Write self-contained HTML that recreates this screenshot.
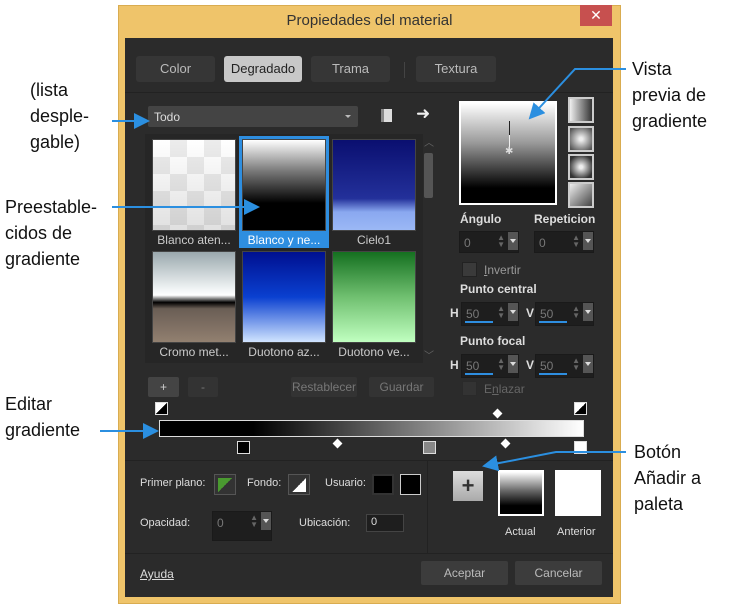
<!DOCTYPE html>
<html><head><meta charset="utf-8"><style>
*{margin:0;padding:0;box-sizing:border-box}
body{width:735px;height:609px;background:#fff;position:relative;overflow:hidden;font-family:"Liberation Sans",sans-serif}
.a{position:absolute}
.ann{position:absolute;font-size:18px;color:#111;line-height:26px}
.t{position:absolute;font-size:12px;color:#ddd;white-space:nowrap}
.tab{position:absolute;top:56px;height:26px;background:#363636;border-radius:3px;color:#bbb;font-size:13px;text-align:center;line-height:26px}
.btn{position:absolute;background:#3a3a3a;border-radius:2px;color:#777;font-size:12px;text-align:center}
.spin{position:absolute;background:#1e1e1e;border:1px solid #1a1a1a}
.spin .v{position:absolute;left:4px;top:4px;font-size:12px;color:#777}
.spin .dd{position:absolute;right:0;top:0;width:10px;height:18px;background:#555}
.spin .dd:after{content:"";position:absolute;left:2px;top:7px;border-left:3px solid transparent;border-right:3px solid transparent;border-top:4px solid #ddd}
.spin .ud{position:absolute;right:13px;top:2px;color:#666;font-size:8px;line-height:7px}
.bar{position:absolute;left:3px;bottom:2px;height:2px;width:28px;background:#2e8ee0}
.th{position:absolute;border:1px solid #444}
.lab{position:absolute;font-size:12px;color:#ccc;text-align:center}
.ico{position:absolute;left:568px;width:26px;height:26px;border:2px solid #ccc;background:#222}
.sw{position:absolute;border:1px solid #555}
.dia{position:absolute;width:7px;height:7px;background:#fff;transform:rotate(45deg)}
.mk{position:absolute;width:13px;height:13px;border:1px solid #ddd;background:#333}
</style></head><body>
<div class="a" style="left:118px;top:5px;width:503px;height:599px;background:#efc46a;border:1px solid #d9ac50"></div>
<div class="t" style="left:118px;width:503px;top:12px;text-align:center;font-size:15px;color:#333">Propiedades del material</div>
<div class="a" style="left:580px;top:5px;width:32px;height:21px;background:#c7504f;color:#fff;font-size:14px;text-align:center;line-height:21px">✕</div>
<div class="a" style="left:125px;top:38px;width:488px;height:559px;background:#2b2b2b"></div>
<div class="tab" style="left:136px;width:79px">Color</div>
<div class="tab" style="left:224px;width:78px;background:#c8c8c8;color:#222">Degradado</div>
<div class="tab" style="left:311px;width:79px">Trama</div>
<div class="a" style="left:404px;top:62px;width:1px;height:16px;background:#444"></div>
<div class="tab" style="left:416px;width:80px">Textura</div>
<div class="a" style="left:125px;top:92px;width:488px;height:1px;background:#222"></div>
<div class="a" style="left:148px;top:106px;width:210px;height:21px;background:#444;border-radius:2px"></div>
<div class="t" style="left:154px;top:110px;color:#ddd">Todo</div>
<div class="a" style="left:345px;top:115px;border-left:3px solid transparent;border-right:3px solid transparent;border-top:3px solid #bbb"></div>
<div class="a" style="left:381px;top:109px;width:11px;height:13px;background:#ddd;border-left:3px solid #888"></div>
<div class="t" style="left:416px;top:104px;font-size:17px;color:#eee">➜</div>
<div class="a" style="left:145px;top:134px;width:278px;height:229px;background:#262626"></div>
<div class="th" style="left:152px;top:139px;width:84px;height:92px;background-color:#fff;background-image:linear-gradient(rgba(0,0,0,0),rgba(0,0,0,0.12)),linear-gradient(45deg,#ececec 25%,transparent 25%,transparent 75%,#ececec 75%),linear-gradient(45deg,#ececec 25%,transparent 25%,transparent 75%,#ececec 75%);background-size:100% 100%,34px 34px,34px 34px;background-position:0 0,0 0,17px 17px"></div>
<div class="lab" style="left:150px;top:233px;width:88px">Blanco aten...</div>
<div class="a" style="left:239px;top:136px;width:90px;height:112px;background:#2e8ee0"></div>
<div class="th" style="left:242px;top:139px;width:84px;height:92px;background:linear-gradient(#fff,#777 35%,#000 70%,#000)"></div>
<div class="lab" style="left:239px;top:233px;width:90px;color:#fff">Blanco y ne...</div>
<div class="th" style="left:332px;top:139px;width:84px;height:92px;background:linear-gradient(#0a0f70,#23309a 65%,#8aa8f0 80%,#9bb8f5)"></div>
<div class="lab" style="left:330px;top:233px;width:88px">Cielo1</div>
<div class="th" style="left:152px;top:251px;width:84px;height:92px;background:linear-gradient(#9aa8ad,#eef2f3 40%,#fff 48%,#000 56%,#6a5e55 63%,#928070)"></div>
<div class="lab" style="left:150px;top:345px;width:88px">Cromo met...</div>
<div class="th" style="left:242px;top:251px;width:84px;height:92px;background:linear-gradient(#001090,#0a40d0 50%,#d0e4ff)"></div>
<div class="lab" style="left:240px;top:345px;width:88px">Duotono az...</div>
<div class="th" style="left:332px;top:251px;width:84px;height:92px;background:linear-gradient(#157020,#70c070 50%,#c0ffc0)"></div>
<div class="lab" style="left:330px;top:345px;width:88px">Duotono ve...</div>
<div class="a" style="left:424px;top:153px;width:9px;height:45px;background:#555;border-radius:2px"></div>
<div class="t" style="left:424px;top:134px;color:#666;font-size:10px">︿</div>
<div class="t" style="left:424px;top:347px;color:#666;font-size:10px">﹀</div>
<div class="a" style="left:459px;top:101px;width:98px;height:104px;border:2px solid #fff;background:linear-gradient(#fff,#999 40%,#333 70%,#000 85%,#000)"></div>
<div class="a" style="left:509px;top:121px;width:1px;height:14px;background:#222"></div>
<div class="a" style="left:509px;top:135px;width:1px;height:14px;background:#eee"></div>
<div class="t" style="left:505px;top:146px;color:#ddd;font-size:10px">✱</div>
<div class="ico" style="top:97px;background:linear-gradient(90deg,#eee,#333)"></div>
<div class="ico" style="top:126px;background:radial-gradient(#eee 10%,#555 90%)"></div>
<div class="ico" style="top:154px;background:radial-gradient(circle,#eee 10%,#333 80%)"></div>
<div class="ico" style="top:182px;background:linear-gradient(135deg,#eee,#444)"></div>
<div class="t" style="left:460px;top:212px;font-weight:bold">Ángulo</div>
<div class="t" style="left:534px;top:212px;font-weight:bold">Repeticion</div>
<div class="spin" style="left:459px;top:231px;width:60px;height:22px"><span class="v">0</span><span class="ud">▲<br>▼</span><span class="dd"></span></div>
<div class="spin" style="left:534px;top:231px;width:60px;height:22px"><span class="v">0</span><span class="ud">▲<br>▼</span><span class="dd"></span></div>
<div class="a" style="left:462px;top:262px;width:15px;height:15px;background:#3a3a3a;border:1px solid #222"></div>
<div class="t" style="left:484px;top:263px;color:#999"><u>I</u>nvertir</div>
<div class="t" style="left:460px;top:282px;font-weight:bold">Punto central</div>
<div class="t" style="left:450px;top:306px;font-weight:bold">H</div>
<div class="spin" style="left:461px;top:302px;width:58px;height:24px"><span class="v">50</span><span class="ud">▲<br>▼</span><span class="dd"></span><span class="bar"></span></div>
<div class="t" style="left:526px;top:306px;font-weight:bold">V</div>
<div class="spin" style="left:535px;top:302px;width:59px;height:24px"><span class="v">50</span><span class="ud">▲<br>▼</span><span class="dd"></span><span class="bar"></span></div>
<div class="t" style="left:460px;top:334px;font-weight:bold">Punto focal</div>
<div class="t" style="left:450px;top:358px;font-weight:bold">H</div>
<div class="spin" style="left:461px;top:354px;width:58px;height:24px"><span class="v">50</span><span class="ud">▲<br>▼</span><span class="dd"></span><span class="bar"></span></div>
<div class="t" style="left:526px;top:358px;font-weight:bold">V</div>
<div class="spin" style="left:535px;top:354px;width:59px;height:24px"><span class="v">50</span><span class="ud">▲<br>▼</span><span class="dd"></span><span class="bar"></span></div>
<div class="a" style="left:462px;top:381px;width:15px;height:15px;background:#333;border:1px solid #2a2a2a"></div>
<div class="t" style="left:484px;top:382px;color:#666">E<u>n</u>lazar</div>
<div class="btn" style="left:148px;top:377px;width:31px;height:20px;background:#444;color:#ccc;line-height:20px">+</div>
<div class="btn" style="left:188px;top:377px;width:30px;height:20px;background:#333;line-height:20px">-</div>
<div class="btn" style="left:291px;top:377px;width:66px;height:20px;background:#333;line-height:20px">Restablecer</div>
<div class="btn" style="left:369px;top:377px;width:65px;height:20px;background:#333;line-height:20px">Guardar</div>
<div class="a" style="left:159px;top:420px;width:425px;height:17px;border:1px solid #ddd;background:linear-gradient(90deg,#000,#000 22%,#fff)"></div>
<div class="mk" style="left:155px;top:402px;background:linear-gradient(135deg,#fff 50%,#000 50%)"></div>
<div class="mk" style="left:574px;top:402px;background:linear-gradient(135deg,#fff 50%,#000 50%)"></div>
<div class="dia" style="left:494px;top:410px"></div>
<div class="mk" style="left:237px;top:441px;background:#000"></div>
<div class="mk" style="left:423px;top:441px;background:#888"></div>
<div class="mk" style="left:574px;top:441px;background:#fff"></div>
<div class="dia" style="left:334px;top:440px"></div>
<div class="dia" style="left:502px;top:440px"></div>
<div class="a" style="left:125px;top:460px;width:488px;height:1px;background:#222"></div>
<div class="a" style="left:427px;top:460px;width:1px;height:93px;background:#222"></div>
<div class="t" style="left:140px;top:477px;font-size:11px">Primer plano:</div>
<div class="sw" style="left:214px;top:474px;width:22px;height:21px;background:#333"><div class="a" style="left:3px;top:3px;width:14px;height:14px;background:linear-gradient(135deg,#4a9a30 50%,transparent 50%)"></div></div>
<div class="t" style="left:247px;top:477px;font-size:11px">Fondo:</div>
<div class="sw" style="left:288px;top:474px;width:22px;height:21px;background:#333"><div class="a" style="left:3px;top:3px;width:14px;height:14px;background:linear-gradient(315deg,#fff 50%,transparent 50%)"></div></div>
<div class="t" style="left:325px;top:477px;font-size:11px">Usuario:</div>
<div class="sw" style="left:372px;top:474px;width:22px;height:21px;background:#000;border:2px solid #333"></div>
<div class="sw" style="left:400px;top:474px;width:21px;height:21px;background:#000;border:1px solid #ccc"></div>
<div class="t" style="left:140px;top:517px;font-size:11px">Opacidad:</div>
<div class="spin" style="left:212px;top:511px;width:60px;height:30px"><span class="v">0</span><span class="ud">▲<br>▼</span><span class="dd"></span></div>
<div class="t" style="left:299px;top:517px;font-size:11px">Ubicación:</div>
<div class="a" style="left:366px;top:514px;width:38px;height:18px;background:#1e1e1e;border:1px solid #444"></div>
<div class="t" style="left:371px;top:516px;font-size:11px">0</div>
<div class="a" style="left:453px;top:471px;width:30px;height:30px;background:linear-gradient(#ddd,#aaa);color:#333;font-size:22px;font-weight:bold;text-align:center;line-height:29px">+</div>
<div class="a" style="left:498px;top:470px;width:46px;height:46px;border:2px solid #fff;background:linear-gradient(#fff,#666 45%,#000 80%)"></div>
<div class="a" style="left:555px;top:470px;width:46px;height:46px;background:#fff"></div>
<div class="t" style="left:505px;top:526px;font-size:11px">Actual</div>
<div class="t" style="left:557px;top:526px;font-size:11px">Anterior</div>
<div class="a" style="left:125px;top:553px;width:488px;height:1px;background:#222"></div>
<div class="t" style="left:140px;top:567px;text-decoration:underline">Ayuda</div>
<div class="btn" style="left:421px;top:561px;width:87px;height:24px;background:#3c3c3c;color:#bbb;line-height:24px">Aceptar</div>
<div class="btn" style="left:515px;top:561px;width:87px;height:24px;background:#3c3c3c;color:#bbb;line-height:24px">Cancelar</div>
<div class="ann" style="left:30px;top:77px">(lista<br>desple-<br>gable)</div>
<div class="ann" style="left:5px;top:194px">Preestable-<br>cidos de<br>gradiente</div>
<div class="ann" style="left:5px;top:391px">Editar<br>gradiente</div>
<div class="ann" style="left:632px;top:56px">Vista<br>previa de<br>gradiente</div>
<div class="ann" style="left:634px;top:439px">Botón<br>Añadir a<br>paleta</div>
<svg class="a" style="left:0;top:0" width="735" height="609">
<defs><marker id="ar" markerWidth="8" markerHeight="8" refX="7" refY="4" orient="auto"><path d="M0,0 L8,4 L0,8 z" fill="#2b8fe0"/></marker></defs>
<g stroke="#2b8fe0" stroke-width="2" fill="none" marker-end="url(#ar)">
<path d="M112,121 L148,121"/>
<path d="M112,207 L258,207"/>
<path d="M100,431 L157,431"/>
<path d="M626,69 L575,69 L530,118"/>
<path d="M626,452 L556,452 L484,466"/>
</g></svg>
</body></html>
